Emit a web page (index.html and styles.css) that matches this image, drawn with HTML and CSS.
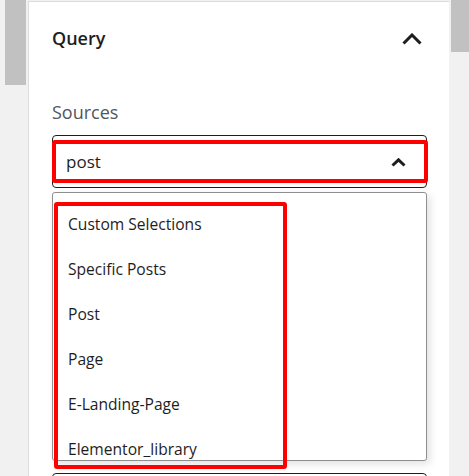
FILE: index.html
```
<!DOCTYPE html>
<html>
<head>
<meta charset="utf-8">
<link rel="stylesheet" href="styles.css">
</head>
<body>
<div class="frame">
  <div class="gutter gutter-left"><div class="thumb thumb-left"></div></div>
  <div class="panel">
    <div class="section-head">
      <span class="section-title">Query</span>
      <svg class="chev-lg" width="20" height="12" viewBox="0 0 20 12"><polyline points="1.5,10.5 10,2 18.5,10.5" fill="none" stroke="#1e1e1e" stroke-width="3"/></svg>
    </div>
    <div class="field-label">Sources</div>
    <div class="select">
      <span class="select-value">post</span>
      <svg class="chev-sm" width="15" height="9" viewBox="0 0 15 9"><polyline points="1.5,7.5 7.5,1.8 13.5,7.5" fill="none" stroke="#1e1e1e" stroke-width="3"/></svg>
      <div class="mark mark-select"></div>
    </div>
    <div class="dropdown-wrap">
      <ul class="dropdown">
        <li>Custom Selections</li>
        <li>Specific Posts</li>
        <li>Post</li>
        <li>Page</li>
        <li>E-Landing-Page</li>
        <li>Elementor_library</li>
      </ul>
      <div class="mark mark-list"></div>
    </div>
    <div class="next-control"></div>
  </div>
  <div class="gutter gutter-right"><div class="thumb thumb-right"></div></div>
</div>
</body>
</html>
```

FILE: styles.css
```
html, body {
  margin: 0;
  padding: 0;
  height: 100%;
  overflow: hidden;
  background: #f1f1f1;
  font-family: "Open Sans", "Noto Sans", sans-serif;
}
.frame {
  display: flex;
  height: 476px;
}
.gutter {
  background: #f1f1f1;
  flex: none;
}
.gutter-left {
  width: 28px;
  padding-left: 5px;
  box-sizing: border-box;
}
.thumb {
  background: #c1c1c1;
}
.thumb-left {
  width: 21px;
  height: 85px;
}
.gutter-right {
  width: 20px;
  padding-left: 2px;
  box-sizing: border-box;
}
.thumb-right {
  width: 18px;
  height: 52px;
}
.panel {
  flex: 1;
  background: #fff;
  margin-top: 1px;
  border-top: 1px solid #dcdcdc;
  border-left: 1px solid #dcdcdc;
  padding: 24px 22px 0 23px;
  overflow: hidden;
}
.section-head {
  display: flex;
  align-items: center;
  justify-content: space-between;
  height: 24px;
  padding-right: 5px;
}
.section-title {
  font-size: 18px;
  font-weight: 600;
  line-height: 24px;
  color: #1e1e1e;
}
.chev-lg {
  display: block;
  margin-top: 1px;
}
.field-label {
  margin-top: 50px;
  font-size: 18px;
  line-height: 24px;
  color: #50575e;
}
.select {
  position: relative;
  margin-top: 11px;
  height: 53px;
  box-sizing: border-box;
  border: 1px solid #1e1e1e;
  border-radius: 4px;
  display: flex;
  align-items: center;
  justify-content: space-between;
  padding: 0 20px 0 13px;
}
.select-value {
  font-size: 17px;
  color: #1e1e1e;
  line-height: 24px;
}
.chev-sm {
  display: block;
  margin-top: 2px;
}
.mark {
  position: absolute;
  box-sizing: border-box;
  border: 4.5px solid #ff0000;
  border-radius: 3px;
  pointer-events: none;
}
.mark-select {
  left: -1px;
  top: 4px;
  width: 376px;
  height: 43px;
}
.dropdown-wrap {
  position: relative;
  margin-top: 4px;
}
.dropdown {
  list-style: none;
  margin: 0;
  padding: 9px 0 0;
  height: 269px;
  box-sizing: border-box;
  border: 1px solid #8f8f8f;
  border-radius: 3px;
  overflow: hidden;
  box-shadow: 3px 3px 8px rgba(0, 0, 0, 0.12);
  background: #fff;
}
.dropdown li {
  height: 45px;
  line-height: 45px;
  padding-left: 15px;
  font-size: 15.6px;
  color: #1e1e1e;
}
.mark-list {
  left: 2px;
  top: 10px;
  width: 233px;
  height: 267px;
}
.next-control {
  margin-top: 12px;
  height: 30px;
  border: 1px solid #1e1e1e;
  border-radius: 4px;
}
```
